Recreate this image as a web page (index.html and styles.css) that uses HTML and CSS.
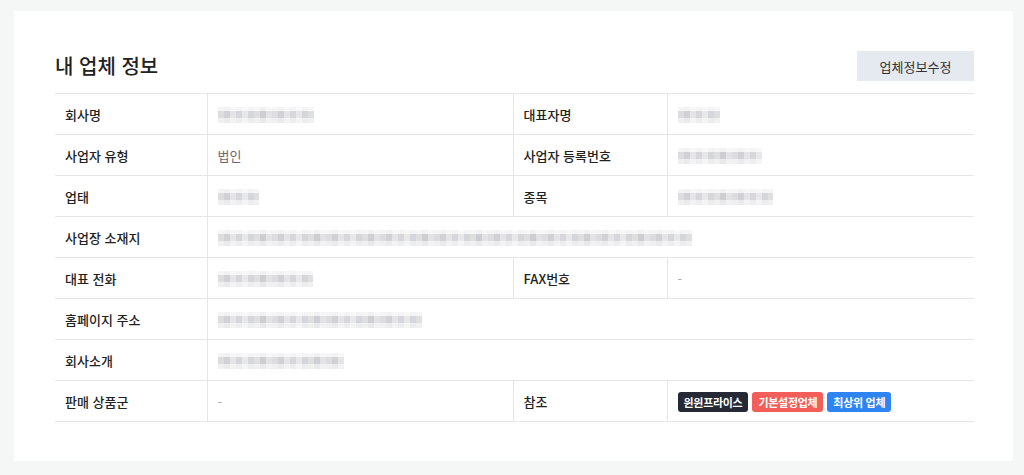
FILE: index.html
```html
<!DOCTYPE html>
<html lang="ko">
<head>
<meta charset="utf-8">
<title>내 업체 정보</title>
<link rel="stylesheet" href="styles.css">
</head>
<body>
<div class="card">
  <div class="card-head">
    <h2 class="title">내 업체 정보</h2>
    <button class="edit-btn" type="button">업체정보수정</button>
  </div>
  <table class="info">
    <colgroup>
      <col class="c-label"><col class="c-value"><col class="c-label2"><col>
    </colgroup>
    <tr>
      <th>회사명</th>
      <td><span class="blur" style="width:96px"></span></td>
      <th class="split">대표자명</th>
      <td><span class="blur" style="width:42px"></span></td>
    </tr>
    <tr>
      <th>사업자 유형</th>
      <td class="txt">법인</td>
      <th class="split">사업자 등록번호</th>
      <td><span class="blur" style="width:84px"></span></td>
    </tr>
    <tr>
      <th>업태</th>
      <td><span class="blur" style="width:41px"></span></td>
      <th class="split">종목</th>
      <td><span class="blur" style="width:95px"></span></td>
    </tr>
    <tr>
      <th>사업장 소재지</th>
      <td colspan="3"><span class="blur" style="width:474px"></span></td>
    </tr>
    <tr>
      <th>대표 전화</th>
      <td><span class="blur" style="width:95px"></span></td>
      <th class="split">FAX번호</th>
      <td class="dash">-</td>
    </tr>
    <tr>
      <th>홈페이지 주소</th>
      <td colspan="3"><span class="blur" style="width:204px"></span></td>
    </tr>
    <tr>
      <th>회사소개</th>
      <td colspan="3"><span class="blur" style="width:126px"></span></td>
    </tr>
    <tr>
      <th>판매 상품군</th>
      <td class="dash">-</td>
      <th class="split">참조</th>
      <td>
        <div class="tags">
          <span class="tag tag-dark">윈윈프라이스</span>
          <span class="tag tag-red">기본설정업체</span>
          <span class="tag tag-blue">최상위 업체</span>
        </div>
      </td>
    </tr>
  </table>
</div>
</body>
</html>
```

FILE: styles.css
```css
html, body {
  margin: 0;
  padding: 0;
}
body {
  background: #f5f7f6;
  padding: 11px 11px 14px 14px;
  font-family: "Noto Sans CJK KR", "Noto Sans", sans-serif;
  color: #222;
}
.card {
  background: #fff;
  padding: 40px 39px 39px 41px;
}
.card-head {
  display: flex;
  align-items: center;
  justify-content: space-between;
  height: 30px;
  margin-bottom: 12px;
}
.title {
  margin: 0;
  font-size: 20px;
  font-weight: 500;
  color: #222;
  letter-spacing: 0;
  line-height: 30px;
}
.edit-btn {
  height: 30px;
  width: 117px;
  border: 0;
  background: #e5e9f0;
  color: #333;
  font-family: inherit;
  font-size: 13px;
  padding: 0;
  cursor: pointer;
}
.info {
  width: 100%;
  border-collapse: collapse;
  table-layout: fixed;
  font-size: 13px;
}
.c-label { width: 152px; }
.c-value { width: 306px; }
.c-label2 { width: 154px; }
.info tr {
  height: 41px;
  border-top: 1px solid #e6e6e6;
  border-bottom: 1px solid #e6e6e6;
}
.info th, .info td {
  padding: 0 10px;
  vertical-align: middle;
  text-align: left;
  height: 40px;
  box-sizing: border-box;
}
.info th {
  font-weight: 500;
  color: #222;
  border-right: 1px solid #e6e6e6;
}
.info th.split {
  border-left: 1px solid #e6e6e6;
}
.info td.txt {
  color: #6d6873;
}
.info td.dash {
  color: #aaa;
}
.blur {
  display: block;
  height: 16px;
  margin-top: 1px;
  background:
    linear-gradient(180deg, rgba(255,255,255,0.75) 0 4px, rgba(255,255,255,0.1) 4px 11px, rgba(255,255,255,0.6) 11px),
    repeating-linear-gradient(90deg, #d9d8dc 0 6px, #cdccd1 6px 12px, #e2e1e4 12px 18px, #d4d2d7 18px 24px, #e6e5e7 24px 30px, #d0d2d7 30px 36px, #dcdbdd 36px 42px, #c9c8cc 42px 48px, #e0dfe1 48px 54px);
}
.tags {
  display: flex;
  gap: 4px;
  margin-top: 2px;
}
.tag {
  display: inline-flex;
  align-items: center;
  height: 20px;
  padding: 0 6px;
  border-radius: 3px;
  color: #fff;
  font-size: 11px;
  font-weight: 700;
  letter-spacing: -0.3px;
}
.tag-dark { background: #252936; }
.tag-red { background: #f45e5a; }
.tag-blue { background: #2f84f4; }
```
